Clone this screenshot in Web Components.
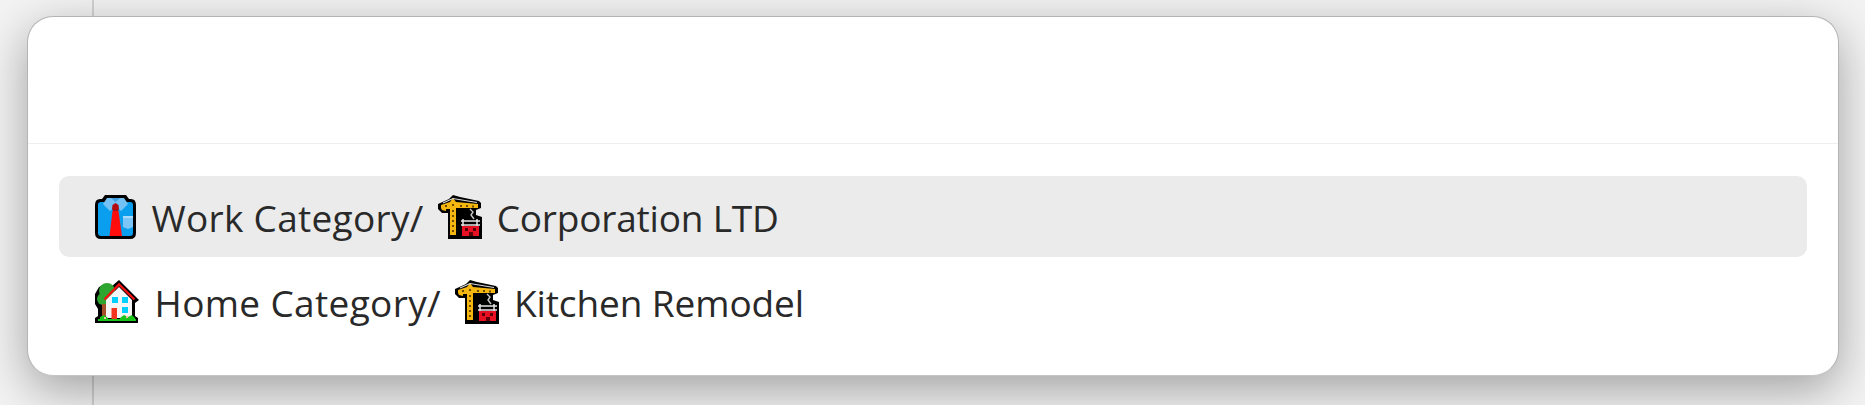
<!DOCTYPE html>
<html lang="en">
<head>
<meta charset="utf-8">
<title>Quick switcher</title>
<style>
    html, body { margin: 0; height: 100%; }
    body { overflow: hidden; }
</style>
</head>
<body>
<page-backdrop>
    <switcher-dialog>
        <result-row selected>
            <emoji-icon name="shirt" size="41"></emoji-icon>
            <span style="letter-spacing: 0.3px; margin-left: 1px">Work Category/</span>
            <emoji-icon name="crane" size="44"></emoji-icon>
            <span style="letter-spacing: -0.2px">Corporation LTD</span>
        </result-row>
        <result-row>
            <emoji-icon name="house" size="44"></emoji-icon>
            <span style="letter-spacing: 0.35px; margin-left: 1px">Home Category/</span>
            <emoji-icon name="crane" size="44"></emoji-icon>
            <span style="letter-spacing: -0.1px">Kitchen Remodel</span>
        </result-row>
    </switcher-dialog>
</page-backdrop>

<script>
(function () {
    const ICONS = {
        shirt: `
            <path fill="#000" d="M10 0 H31 L34 4 H36 Q41 4 41 10 V38 Q41 44 35 44 H6 Q0 44 0 38 V10 Q0 4 5 4 H7 Z"/>
            <path fill="#0a9fee" d="M6 7 H35 Q38 7 38 10 V38 Q38 41 35 41 H6 Q3 41 3 38 V10 Q3 7 6 7 Z"/>
            <path fill="#74c2f5" d="M12 3 H29 L33 9 L26 16 L20.500 11 L15 16 L8 9 Z"/>
            <path fill="#3f9fe0" d="M16 3 H25 L20.500 7 Z"/>
            <path fill="#b30b12" d="M17.500 10 L20.500 8 L23.500 10 L24 14 L23 16 H18 L17 14 Z"/>
            <path fill="#ff0d0d" d="M17.500 16 H23.500 L27 41 H14.500 Z"/>
            <path fill="#7cc6f7" d="M28 21 H38 V32 L33 34 L28 32 Z"/>
            <path fill="#a9dcfa" d="M28 21 H38 V23 H28 Z"/>
        `,
        crane: `
            <path fill="#000" d="M0 9 L11 4 L15 0 L22 2 L41 6 L43 8 V13 L38 15 V20 L44 22 V44 H10 V18 H4 L0 14 Z"/>
            <path fill="#f5b70f" d="M3 10 L12 7 L15 3 L18 7 L40 9 V13 L18 13 V40 L12 40 V14 L8 14 V16 L4 15 L3 13 Z"/>
            <path fill="#6d4c00" d="M14 9h2v2h-2zM14 15h2v2h-2zM14 20h2v2h-2zM14 25h2v2h-2zM14 30h2v2h-2zM14 35h2v2h-2zM7 10h2v2h-2zM22 10h2v2h-2zM28 10h2v2h-2zM34 10.500h2v2h-2z"/>
            <path fill="none" stroke="#dcdcdc" stroke-width="1.200" d="M5 8 L15 3.500 L39 7.500"/>
            <path fill="none" stroke="#c8c8c8" stroke-width="1.400" d="M32 14 L35 17 L33 20 L36 24"/>
            <path fill="none" stroke="#e6e6e6" stroke-width="1.500" d="M23 26 H42 M23 30 H42 M25 24 V31 M39 24 V31"/>
            <rect x="24" y="31" width="17" height="10" fill="#e81123"/>
            <path fill="#5c0008" d="M27 33h3v3h-3zM35 33h3v3h-3zM31 37h4v4h-4z"/>
        `,
        house: `
            <path fill="#000" d="M24 0 L44 20 L40 23 V36 L43 38 V43 H0 V38 L3 36 V29 L0 24 V14 L4 7 L11 4 L17 6 Z"/>
            <circle cx="12" cy="11" r="8" fill="#2ea52e"/>
            <circle cx="8" cy="19" r="6" fill="#2ea52e"/>
            <rect x="7" y="24" width="4" height="12" fill="#a5502a"/>
            <path fill="#f5f5f5" d="M24 7 L37 20 V38 H11 V20 Z"/>
            <path fill="none" stroke="#f21010" stroke-width="2.400" d="M9.500 19.500 L24 4.500 L39.500 19.500"/>
            <rect x="17" y="17" width="6" height="6" fill="#00d0ff"/>
            <rect x="27" y="17" width="6" height="6" fill="#00d0ff"/>
            <rect x="27" y="27" width="6" height="6" fill="#00d0ff"/>
            <rect x="16.500" y="28" width="5.500" height="11" fill="#f5341f"/>
            <path fill="#19c419" d="M3 39 H41 V41 H3 Z M5 37 L9 35 L13 38 V39 H5 Z M25 38 L29 35 L33 37 L37 35 L40 38 V39 H25 Z"/>
            <path fill="#f6c1a0" d="M9 37h2v2h-2zM31 36h2v2h-2z"/>
        `
    };

    class EmojiIcon extends HTMLElement {
        connectedCallback() {
            const size = this.getAttribute('size') || '44';
            const name = this.getAttribute('name');

            this.attachShadow({ mode: 'open' });
            this.shadowRoot.innerHTML = `
                <style>
                    :host { display: block; flex: 0 0 auto; line-height: 0; }
                    svg { display: block; }
                </style>
                <svg width="${size}" height="44" viewBox="0 0 ${size} 44" role="img" aria-hidden="true">${ICONS[name] || ''}</svg>
            `;
        }
    }

    class ResultRow extends HTMLElement {
        connectedCallback() {
            this.attachShadow({ mode: 'open' });
            this.shadowRoot.innerHTML = `
                <style>
                    :host {
                        display: flex;
                        align-items: center;
                        gap: 14.5px;
                        height: 81px;
                        padding: 0 36px;
                        border-radius: 10px;
                        box-sizing: border-box;
                        color: #292929;
                    }
                    :host([selected]) { background: #ebebeb; }
                    ::slotted(span) { padding-top: 2px; }
                </style>
                <slot></slot>
            `;
        }
    }

    class SwitcherDialog extends HTMLElement {
        connectedCallback() {
            this.attachShadow({ mode: 'open' });
            this.shadowRoot.innerHTML = `
                <style>
                    :host {
                        position: absolute;
                        left: 27px;
                        top: 16px;
                        width: 1812px;
                        height: 360px;
                        box-sizing: border-box;
                        display: flex;
                        flex-direction: column;
                        background: #fff;
                        border: 1px solid #b4b4b4;
                        border-bottom-color: #c4c4c4;
                        border-radius: 26px;
                        box-shadow: 0 14px 48px rgba(0, 0, 0, 0.34);
                        font: 37px/48px "Open Sans", "Noto Sans", sans-serif;
                    }
                    .search {
                        height: 126px;
                        border-bottom: 1px solid #efefef;
                    }
                    .results {
                        display: flex;
                        flex-direction: column;
                        gap: 4px;
                        padding: 32px 31px 0;
                    }
                </style>
                <div class="search"></div>
                <div class="results"><slot></slot></div>
            `;
        }
    }

    class PageBackdrop extends HTMLElement {
        connectedCallback() {
            this.attachShadow({ mode: 'open' });
            this.shadowRoot.innerHTML = `
                <style>
                    :host {
                        display: flex;
                        position: relative;
                        height: 405px;
                        overflow: hidden;
                        background: #f3f3f3;
                    }
                    .rail {
                        width: 92px;
                        border-right: 2px solid #c9c9c9;
                        opacity: 0.8;
                    }
                </style>
                <div class="rail"></div>
                <slot></slot>
            `;
        }
    }

    customElements.define('emoji-icon', EmojiIcon);
    customElements.define('result-row', ResultRow);
    customElements.define('switcher-dialog', SwitcherDialog);
    customElements.define('page-backdrop', PageBackdrop);
})();
</script>
</body>
</html>
